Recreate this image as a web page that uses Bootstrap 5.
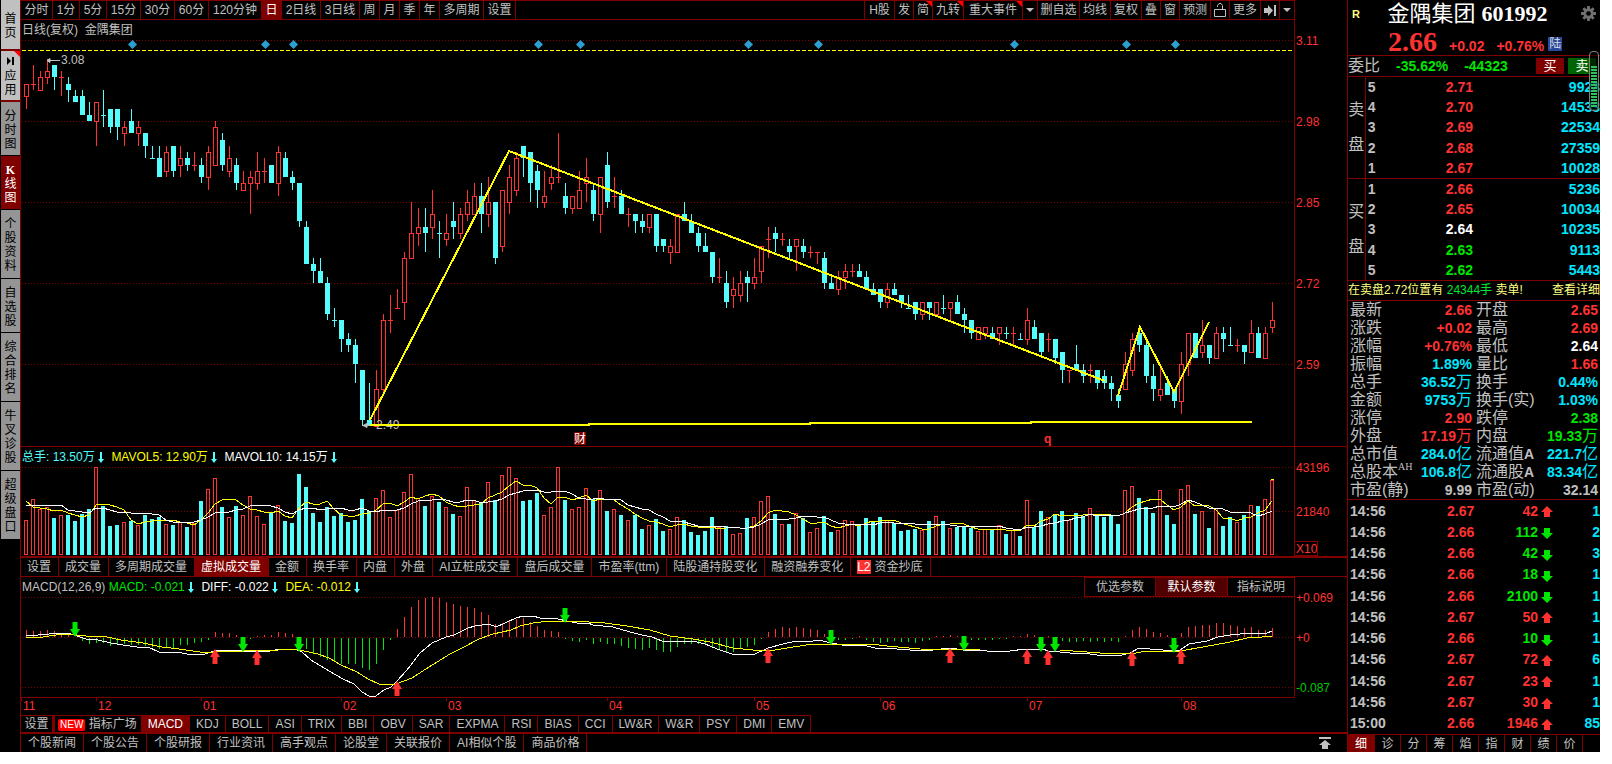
<!DOCTYPE html>
<html lang="zh-CN">
<head>
<meta charset="utf-8">
<meta name="viewport" content="width=device-width, initial-scale=1">
<title>金隅集团 601992</title>
<link href="https://cdn.jsdelivr.net/npm/bootstrap@5.3.0/dist/css/bootstrap.min.css" rel="stylesheet">
<style>
:root{--line:#800000;--up:#ff3232;--down:#00e600;--cyan:#00e6ff;--grey:#c0c0c0}
body{background:#fff;padding:0 12px 12px 0;font-family:"Liberation Sans","Noto Sans CJK SC",sans-serif;font-size:12px;line-height:18px;color:var(--grey)}
button,.newslink{background:#000;color:var(--grey);border:0;padding:0;font-size:12px;line-height:18px;text-decoration:none;white-space:nowrap;border-radius:0}
.app{background:#000}
.up{color:var(--up)}.down{color:var(--down)}.cy{color:var(--cyan)}.wh{color:#fff}
/* left navigation: one character fits on each line */
.side{width:21px;border-right:1px solid var(--line);padding-left:1px}
.side button{width:19px;height:54px;padding:2px 2px 0;white-space:normal;background:#959595;color:#000;border-bottom:1px solid #000;line-height:14px;text-align:center;position:relative}
.side .tall{height:69px}
.side .lite{background:#c0c0c0;height:51px;border-bottom:2px solid var(--line)}
.side .cur{background:var(--line);color:#fff}
.side b{font-family:"Liberation Serif",serif}
.corner{position:absolute;top:0;right:0;width:0;height:0;border-top:6px solid red;border-left:6px solid transparent}
/* toolbars */
.plot-w{width:calc(100% - 52px)}
.bar{height:20px;border-top:1px solid var(--line);border-bottom:1px solid var(--line)}
.bar button{position:relative;border-right:1px solid var(--line);text-align:center}
.bar button.on,.tabs button.on{background:var(--line);color:#fff}
.w15{width:15px}.w19{width:19px}.w20{width:20px}.w27{width:27px}.w30{width:30px}.w31{width:31px}.w32{width:32px}.w34{width:34px}.w39{width:39px}.w42{width:42px}.w44{width:44px}.w53{width:53px}.w59{width:59px}
.bar button svg{display:block;margin:0 auto}
.tabs button{padding:0 7px 0 6px;border-right:1px solid var(--line)}
.news{height:18px}
.newslink{padding:0 7px;border-right:1px solid var(--line)}
.newslink:hover{color:#fff}
.ind{height:19px;border-bottom:2px solid var(--line)}
.ind .cells{border-top:1px solid var(--line)}
.ind button{line-height:16px;padding:0 6px}
.ind .plaza{padding:0 4px 0 3px}
.badge-new{background:red;color:#fff;border-radius:2px;padding:0 2px;font-size:10px;line-height:12px;display:inline-block}
.badge-l2{background:var(--up);color:#fff;line-height:14px;display:inline-block;margin-right:4px}
.legend-row{height:20px;border-right:1px solid var(--line);line-height:20px;padding-left:1px}
.legend-row.first{height:18px}
.legend-row svg{vertical-align:-2px}
.price-box,.vol-box{border-bottom:1px solid var(--line)}
.params button{border:1px solid var(--line);border-left-width:0;width:72px;height:20px;line-height:18px}
.params button:first-child{border-left-width:1px}
.params button.on{background:#500000;color:#fff}
.params button:last-child{width:66px;border-right:0}
svg.chart{display:block;width:100%;height:auto;overflow:visible;font-size:12px}
/* quote panel */
.quote{width:253px;border-left:1px solid var(--line);font-size:14px}
.quote hr{margin:0;border:0;border-top:1px solid var(--line);opacity:1}
.stock{font-size:22px;line-height:27px;color:#fff;padding-right:6px}
.stock b,.last{font-family:"Liberation Serif",serif}
.last{font-size:28px;line-height:26px}
.tag-lu{background:#28479b;color:#ddd;font-size:12px;line-height:14px;width:14px;font-weight:400}
.deal{width:28px;height:16px;line-height:16px;color:#fff;font-size:13px}
.deal.buy{background:#800000}.deal.sell{background:#006400}
.lab{font-size:16px;font-weight:400;color:var(--grey)}
.sidecol{width:19px;border-right:1px solid var(--line);line-height:18px;text-align:center}
.qt{border-collapse:collapse;width:100%;font-weight:700;table-layout:fixed}
.qt td,.qt th{padding:0;white-space:nowrap}
.depth{height:101px}
.depth th{width:80px;padding-left:2px}
.depth td:nth-child(2){width:60px}
.note{height:19px;font-size:12px;color:#ffff80;line-height:19px;white-space:nowrap}
.stats{line-height:18px;padding:0}
.stats tr{height:18px}
.stats th{font-weight:400;font-size:16px;padding-left:2px;width:70px}
.stats td{text-align:right;padding-right:2px}
.stats td span{font-weight:400;font-size:16px}
.stats sup{font-size:10px;top:-7px;font-family:"Liberation Serif",serif}
.ticks{height:100%}
.ticks td{line-height:20px}
.ticks td:nth-child(1){width:99px;padding-left:2px}
.ticks td:nth-child(2){width:30px}
.ticks td:nth-child(3){width:61px;text-align:right}
.ticks td:nth-child(4){width:18px;text-align:center}
.ticks svg{display:block;margin:3px auto 0}
.minitabs{height:18px;border-top:1px solid var(--line)}
.minitabs button{width:26px;border-right:1px solid var(--line);line-height:16px}
.minitabs button.on{width:27px;background:var(--line);color:#fff}
.meter{position:absolute;right:1px;top:51px;width:10px;height:60px;border:1px solid #808080;border-radius:4px;background:rgba(0,0,0,.6);padding:14px 1px 2px}
.meter i{display:block;height:100%;background:repeating-linear-gradient(#2fc060 0 2px,transparent 2px 3px)}
</style>
</head>
<body>
<div class="app d-flex">
  <nav class="side d-flex flex-column flex-shrink-0" aria-label="导航">
    <button class="lite">首页</button>
    <button class="lite"><i class="corner"></i><svg class="d-block mx-auto mb-1" width="8" height="8" viewBox="0 0 8 8"><path d="M0 0L4 4L0 8zM4 0H4V8zM5 0H7V8H5z"/></svg>应用</button>
    <button>分时图</button>
    <button class="cur"><b>K</b>线图</button>
    <button class="tall">个股资料</button>
    <button>自选股</button>
    <button class="tall">综合排名</button>
    <button class="tall">牛叉诊股</button>
    <button class="tall">超级盘口</button>
  </nav>

  <main class="flex-fill" style="min-width:0">
    <div class="bar plot-w d-flex">
      <button class="w32">分时</button><button class="w27">1分</button><button class="w27">5分</button><button class="w34">15分</button><button class="w34">30分</button><button class="w34">60分</button><button class="w53">120分钟</button><button class="w20 on">日</button><button class="w39">2日线</button><button class="w39">3日线</button><button class="w20">周</button><button class="w20">月</button><button class="w20">季</button><button class="w20">年</button><button class="w44">多周期</button><button class="w32">设置</button>
      <div class="ms-auto d-flex border-start" style="border-color:var(--line)!important">
        <button class="w30">H股</button><button class="w19">发</button><button class="w19">简<i class="corner"></i></button><button class="w31">九转<i class="corner"></i></button><button class="w59">重大事件<i class="corner"></i></button><button class="w15" aria-label="展开"><svg width="8" height="4"><path d="M0 0H8L4 4z" fill="#c0c0c0"/></svg></button><button class="w42">删自选</button><button class="w31">均线</button><button class="w31">复权</button><button class="w19">叠</button><button class="w19">窗</button><button class="w31">预测</button><button class="w19" aria-label="锁定"><svg width="12" height="14" fill="none" stroke="#c0c0c0"><path d="M.5 6.500H11.500V13.500H.5zM3.500 4V2.500L5 .5H7L8.500 2.500V6"/></svg></button><button class="w31">更多</button><button class="w19" aria-label="下一个"><svg width="12" height="11" fill="#c0c0c0"><path d="M0 3H4V0L9 5.500L4 11V8H0zM10 0H12V11H10z"/></svg></button><button class="w15" aria-label="展开"><svg width="8" height="4"><path d="M0 0H8L4 4z" fill="#c0c0c0"/></svg></button>
      </div>
    </div>

    <section class="price-box">
      <div class="legend-row first plot-w">日线(复权)&nbsp; 金隅集团</div>
      <svg class="chart" viewBox="21 38 1326 408" id="price" role="img" aria-label="日K线">
        <rect x="1294" y="38" width="1" height="408" fill="#800000"/>
        <g stroke="#800000" stroke-dasharray="1 2" shape-rendering="crispEdges">
          <path d="M22 40.500H1294M22 121.500H1294M22 202.500H1294M22 283.500H1294M22 364.500H1294"/>
        </g>
        <path d="M22 50.500H1292" stroke="#ff0" stroke-dasharray="4 2"/>
        <g id="diamonds" fill="#2a9fd0"></g>
        <g id="candles" shape-rendering="crispEdges"></g>
        <path d="M47 60.500H60M47 60.500l3-2v4z" stroke="#c0c0c0" fill="#c0c0c0"/>
        <text x="61" y="64" fill="#c0c0c0">3.08</text>
        <path d="M363 425.500H375M363 425.500l4-2v4z" stroke="#c0c0c0" fill="#c0c0c0"/>
        <text x="376" y="429" fill="#c0c0c0">2.49</text>
        <g stroke="#ff0" stroke-width="2" fill="none" shape-rendering="crispEdges">
          <path d="M370 420L509 151L1105 381M1118 396L1140 327L1174 392L1209 322"/>
          <path d="M370 425H589V424H810V423H1031V422H1252"/>
        </g>
        <rect x="574" y="432" width="12" height="13" fill="#800000"/>
        <text x="574" y="443" fill="#fff">财</text>
        <text x="1044" y="443" fill="#ff3232" font-weight="700">q</text>
        <g fill="#ff3232"><text x="1296" y="45">3.11</text><text x="1296" y="126">2.98</text><text x="1296" y="207">2.85</text><text x="1296" y="288">2.72</text><text x="1296" y="369">2.59</text></g>
      </svg>
    </section>

    <section class="vol-box">
      <div class="legend-row plot-w"><span style="color:#54fcfc">总手: 13.50万<svg width="10" height="12"><use href="#dn"/></svg></span>&nbsp; <span style="color:#ff0">MAVOL5: 12.90万<svg width="10" height="12"><use href="#dn"/></svg></span>&nbsp; <span class="wh">MAVOL10: 14.15万<svg width="10" height="12"><use href="#dn"/></svg></span></div>
      <svg class="chart" viewBox="21 467 1326 89" role="img" aria-label="成交量">
        <defs><path id="dn" d="M5 1h2v7h2L6 12L3 8h2z" fill="#54fcfc"/></defs>
        <rect x="1294" y="467" width="1" height="89" fill="#800000"/>
        <path d="M22 467.500H1294M22 511.500H1294" stroke="#800000" stroke-dasharray="1 2" shape-rendering="crispEdges"/>
        <g id="vols" shape-rendering="crispEdges"></g>
        <g fill="#ff3232"><text x="1296" y="472">43196</text><text x="1296" y="516">21840</text><text x="1296" y="553">X10</text></g>
        <rect x="1294.500" y="541.500" width="23" height="14" fill="none" stroke="#800000"/>
      </svg>
    </section>

    <div class="bar tabs d-flex">
      <button>设置</button><button>成交量</button><button>多周期成交量</button><button class="on">虚拟成交量</button><button>金额</button><button>换手率</button><button>内盘</button><button>外盘</button><button>AI立桩成交量</button><button>盘后成交量</button><button>市盈率(ttm)</button><button>陆股通持股变化</button><button>融资融券变化</button><button><span class="badge-l2">L2</span>资金抄底</button>
    </div>

    <section>
      <div class="legend-row plot-w d-flex"><div>MACD(12,26,9) <span class="down">MACD: -0.021<svg width="10" height="12"><use href="#dn"/></svg></span>&nbsp; <span class="wh">DIFF: -0.022<svg width="10" height="12"><use href="#dn"/></svg></span>&nbsp; <span style="color:#ff0">DEA: -0.012<svg width="10" height="12"><use href="#dn"/></svg></span></div>
        <div class="params ms-auto d-flex"><button>优选参数</button><button class="on">默认参数</button><button>指标说明</button></div>
      </div>
      <svg class="chart" viewBox="21 597 1326 118" role="img" aria-label="MACD">
        <path d="M22 597.500H1294M22 637.500H1294M22 687.500H1294" stroke="#800000" stroke-dasharray="1 2" shape-rendering="crispEdges"/>
        <path d="M21 697.500H1294.500V597" fill="none" stroke="#800000"/>
        <g id="hist" shape-rendering="crispEdges"></g>
        <g fill="none" shape-rendering="crispEdges">
          <polyline stroke="#fff" points="26,636 61,633 68,633 77,636 86,639 98,640 111,643 123,645 137,647 148,647 159,652 182,653 187,654 205,654 214,651 218,650 234,650 243,651 257,651 270,651 280,649 295,649 302,652 311,660 329,671 343,679 354,684 362,692 369,696 376,696 384,690 391,687 397,681 407,670 420,653 432,643 446,637 454,635 468,628 475,626 489,624 496,627 516,618 523,616 533,616 540,618 558,619 567,621 577,623 588,623 593,625 613,627 630,632 642,635 652,637 662,641 668,642 678,641 693,641 705,644 717,649 732,654 755,654 768,648 787,643 797,641 813,641 818,640 832,643 842,645 863,645 875,648 897,649 910,650 933,650 950,648 963,650 987,651 1010,651 1025,649 1043,649 1048,651 1060,652 1070,653 1090,654 1097,655 1112,655 1118,656 1130,653 1139,648 1150,649 1163,650 1180,650 1189,644 1207,641 1218,637 1230,635 1240,634 1252,633 1260,634 1267,633 1272,631"/>
          <polyline stroke="#ff0" points="26,638 43,637 62,634 77,635 86,636 107,637 121,640 143,643 162,647 179,649 200,652 214,652 243,651 279,650 296,649 304,651 318,654 329,658 341,665 357,672 368,679 379,684 396,684 412,678 429,667 450,654 464,647 479,639 493,634 511,630 520,626 533,623 550,621 573,621 605,623 627,626 650,630 670,636 693,639 710,642 733,648 753,650 775,650 787,648 813,644 832,644 870,644 887,646 920,649 980,650 1060,650 1100,653 1130,654 1147,651 1180,651 1203,647 1230,642 1247,638 1262,637 1272,636"/>
        </g>
        <g id="signals"></g>
        <g id="months" fill="#ff3232"></g>
        <g fill="#ff3232"><text x="1296" y="602">+0.069</text><text x="1296" y="642">+0</text><text x="1296" y="692" fill="#00c800">-0.087</text></g>
      </svg>
    </section>

    <div class="ind d-flex tabs">
      <div class="cells d-flex"><button class="w34 px-0" style="border-right-width:3px">设置</button><button class="plaza"><span class="badge-new">NEW</span> 指标广场</button><button class="on">MACD</button><button>KDJ</button><button>BOLL</button><button>ASI</button><button>TRIX</button><button>BBI</button><button>OBV</button><button>SAR</button><button>EXPMA</button><button>RSI</button><button>BIAS</button><button>CCI</button><button>LW&amp;R</button><button>W&amp;R</button><button>PSY</button><button>DMI</button><button>EMV</button></div>
    </div>
    <div class="news d-flex">
      <a class="newslink" href="#">个股新闻</a><a class="newslink" href="#">个股公告</a><a class="newslink" href="#">个股研报</a><a class="newslink" href="#">行业资讯</a><a class="newslink" href="#">高手观点</a><a class="newslink" href="#">论股堂</a><a class="newslink" href="#">关联报价</a><a class="newslink" href="#">AI相似个股</a><a class="newslink" href="#">商品价格</a>
      <button class="ms-auto me-3" aria-label="收起"><svg class="d-block" width="12" height="12" fill="#c0c0c0"><path d="M0 0H12V2H0zM6 3L12 8H9V12H3V8H0z"/></svg></button>
    </div>
  </main>

  <aside class="quote d-flex flex-column flex-shrink-0 position-relative">
    <div class="d-flex justify-content-between align-items-center">
      <b class="ps-1" style="color:#ffff80;font-size:11px">R</b>
      <div class="stock">金隅集团 <b>601992</b></div>
      <svg class="me-1" width="15" height="15" viewBox="0 0 16 16"><g stroke="#707070" stroke-width="3"><path d="M8 0V16M0 8H16M2.500 2.500L13.500 13.500M13.500 2.500L2.500 13.500"/></g><circle cx="8" cy="8" r="5.500" fill="#707070"/><circle cx="8" cy="8" r="2.500"/></svg>
    </div>
    <div class="d-flex align-items-end up fw-bold" style="height:28px;padding-left:40px">
      <span class="last">2.66</span><span class="ms-2 ps-1">+0.02</span><span class="ms-2 ps-1">+0.76%</span><span class="tag-lu ms-1 mb-1 text-center">陆</span>
    </div>
    <hr>
    <div class="d-flex align-items-center fw-bold down" style="height:20px">
      <span class="lab">委比</span><span class="ms-3">-35.62%</span><span class="ms-3">-44323</span>
      <button class="deal buy ms-auto me-1">买</button><button class="deal sell me-1">卖</button>
    </div>
    <hr>
    <div class="d-flex">
      <div class="sidecol lab d-flex flex-column justify-content-around py-3"><span>卖</span><span>盘</span></div>
      <table class="qt depth" id="asks"></table>
    </div>
    <hr>
    <div class="d-flex">
      <div class="sidecol lab d-flex flex-column justify-content-around py-3"><span>买</span><span>盘</span></div>
      <table class="qt depth" id="bids"></table>
    </div>
    <hr>
    <div class="note d-flex"><span>在卖盘2.72位置有 <span style="color:#00e632">24344手</span> 卖单!</span><a class="ms-auto text-decoration-none" style="color:inherit" href="#">查看详细</a></div>
    <hr>
    <table class="qt stats" id="stats"></table>
    <hr>
    <div class="flex-fill"><table class="qt ticks" id="ticks"></table></div>
    <div class="minitabs d-flex"><button class="on">细</button><button>诊</button><button>分</button><button>筹</button><button>焰</button><button>指</button><button>财</button><button>绩</button><button>价</button></div>
    <div class="meter"><i></i></div>
  </aside>
</div>

<script src="https://cdn.jsdelivr.net/npm/bootstrap@5.3.0/dist/js/bootstrap.bundle.min.js"></script>
<script>
// colour, high, body top, body bottom, low (prices in fen)
const K = `r304 304 302 300,r307 304 304 303,r306 305 303 303,r308 306 305 304,c307 307 305 303,r306 305 305 302,c305 304 303 301,c303 302 301 301,c303 302 299 299,c301 299 298 298,r301 301 298 294,c303 299 299 297,c300 300 297 296,c300 300 297 295,r298 297 296 294,c300 298 296 296,r298 297 296 294,c296 296 294 292,c294 292 292 292,c294 292 289 289,r294 293 290 289,c294 294 290 289,r294 292 291 289,c293 292 291 290,r293 291 291 290,c292 291 289 288,r294 293 289 287,r298 297 291 291,c296 295 291 290,r294 292 290 289,c292 291 288 287,r290 288 287 287,r290 289 288 283,r293 290 288 287,r292 290 290 288,c291 291 288 288,r294 293 288 286,c293 292 289 289,c290 289 288 287,c288 288 282 281,c282 281 275 275,c276 275 274 272,c276 274 272 272,c273 272 267 266,c268 266 266 265,c266 266 263 261,c264 263 262 261,c263 262 259 256,c258 258 250 249,c256 250 249 249,r258 255 249 249,r267 266 255 254,r270 266 266 264,r271 268 268 268,r277 276 269 266,r285 280 276 276,r284 281 280 278,c284 281 280 277,r287 283 281 279,c282 280 280 276,r283 280 279 278,c285 282 281 279,r284 283 280 279,r287 285 283 282,r288 286 283 283,c288 286 283 280,r289 285 283 281,c285 285 276 275,r287 287 278 277,r291 289 285 283,r293 292 287 286,c294 294 292 289,c293 293 288 285,c291 290 287 284,r290 286 285 284,r291 289 288 287,r296 289 289 288,c288 286 284 283,r286 286 284 283,r290 287 284 284,r292 289 288 285,c288 287 283 282,r289 289 283 280,c293 291 285 284,r289 286 286 284,c287 286 283 283,r284 283 283 281,c283 283 282 280,c283 282 281 280,r283 283 281 280,c283 283 278 277,c279 279 278 277,r279 278 277 275,r283 283 277 277,c285 283 282 282,c283 282 280 280,c281 280 278 277,c280 278 277 277,c277 277 273 272,r276 273 273 272,c274 272 269 268,r273 271 270 268,r274 272 270 269,c274 273 272 269,r276 273 272 271,r278 278 274 272,r281 279 279 276,c281 280 279 277,r280 279 279 278,c279 278 277 276,r279 279 278 274,c279 278 277 276,r278 277 277 276,r277 277 277 275,c277 276 272 271,c273 272 271 271,r274 273 271 270,r275 274 273 271,r275 274 274 273,c275 274 273 273,c274 273 271 271,c272 271 270 270,c271 271 269 268,r272 271 269 268,c272 271 270 270,c270 270 269 268,c270 268 268 268,c269 269 267 266,r269 269 267 266,c269 269 268 266,r269 269 267 267,c270 268 268 267,r269 269 268 266,c270 269 267 267,c268 267 266 264,c266 266 264 263,r265 265 263 263,r265 265 264 263,c265 264 263 263,r265 265 264 262,c265 264 264 263,r265 264 264 262,c264 263 263 263,r268 266 263 262,c266 265 263 263,c264 264 261 260,r264 263 263 261,c263 263 260 259,c261 261 258 256,r258 258 258 256,c262 259 258 258,c259 258 257 256,r259 258 258 256,c258 258 256 255,c258 257 256 255,c257 256 255 253,c255 254 253 252,r261 259 255 255,r264 263 258 257,c265 264 262 261,c263 262 257 256,c259 257 255 253,r259 255 254 253,c257 256 254 254,c255 255 253 252,r261 259 253 251,r264 264 259 257,c264 264 260 260,r266 262 261 260,c262 262 260 259,r265 264 260 260,c265 264 263 261,c265 262 262 262,r263 262 262 261,c262 262 261 259,r266 264 261 261,c265 264 260 260,r265 264 260 260,r269 266 265 264`.split(',');
const RED='#ff3232', CY='#54fcfc';
const rect=(x,y,w,h,f)=>`<rect x="${x}" y="${y}" width="${w}" height="${h}" fill="${f}"/>`;
const box=(x,y,w,h)=>`<rect x="${x+.5}" y="${y+.5}" width="${w-1}" height="${h-1}" fill="#000" stroke="${RED}"/>`;
const py=p=>Math.round(40+(311-p)*6.23);
const $=id=>document.getElementById(id);
$('candles').innerHTML=K.map((s,i)=>{
  const red=s[0]==='r', [h,t,b,l]=s.slice(1).split(' ').map(v=>py(+v)), x=24+7*i, c=red?RED:CY;
  let o=rect(x+2,h,1,Math.max(1,l-h),c);
  o+= t===b ? rect(x,t,5,1,c) : red ? box(x,t,5,b-t+1) : rect(x,t,5,b-t,c);
  return o;
}).join('');
$('diamonds').innerHTML=[132,265,293,538,580,748,818,1014,1126,1175].map(x=>`<path d="M${x-4} 44.500L${x+.5} 40L${x+5} 44.500L${x+.5} 49z"/>`).join('');

// turnover bars: distance of each top below the pane's reference, three units to a pixel
const V=[241,178,208,200,235,226,226,243,222,208,82,199,259,256,247,244,256,226,238,232,253,256,247,262,250,184,148,115,202,232,199,226,169,229,253,220,196,244,250,103,142,220,247,202,229,220,247,241,178,214,175,151,232,211,157,103,175,199,169,187,202,223,229,142,181,190,127,181,106,82,115,184,181,160,226,202,82,181,208,202,145,178,151,214,208,226,241,226,268,256,238,274,268,232,241,277,286,274,232,262,259,283,280,235,232,184,169,223,253,253,220,235,277,265,229,277,271,241,244,253,235,244,232,241,250,274,271,268,271,244,229,244,265,262,262,265,274,268,268,256,283,271,289,181,262,214,232,223,214,241,220,229,205,226,232,226,253,151,139,175,202,220,151,226,253,148,136,223,214,265,205,259,232,247,226,196,199,178,121];
const vy=v=>Math.round(440+v/3);
const ma=(n,seed)=>V.map((_,i)=>{
  const v=i<seed.length?seed[i]:V.slice(i-n+1,i+1).reduce((a,b)=>a+b)/n;
  return (26+7*i)+','+vy(v);
}).join(' ');
$('vols').innerHTML=V.map((v,i)=>{
  const x=24+7*i,y=vy(v);
  return K[i][0]==='r'?box(x,y,4,555-y):rect(x,y,4,555-y,CY);
}).join('')
 +`<polyline fill="none" stroke="#ff0" points="${ma(5,[184,202,205,208])}"/>`
 +`<polyline fill="none" stroke="#fff" points="${ma(10,[196,196,196,196,196,196,211,214,217])}"/>`
 +rect(1271,479,3,1,'#ff0');

// MACD histogram, three units to a pixel
const H=[22,19,19,22,19,13,6,0,-8,-18,-15,-15,-23,-20,-18,-22,-20,-24,-28,-34,-31,-29,-22,-20,-14,-13,-5,16,13,13,7,-10,-2,3,6,7,16,13,10,-14,-32,-44,-56,-65,-72,-79,-79,-79,-91,-97,-79,-35,-5,25,61,91,112,118,120,118,106,100,94,91,88,76,67,40,43,49,55,58,46,34,22,19,16,-2,-8,-11,-5,-17,-11,-17,-17,-23,-29,-32,-35,-29,-37,-41,-41,-26,-18,-18,-18,-21,-28,-37,-44,-41,-32,-28,-20,-2,16,25,31,28,31,28,25,22,10,-2,-5,-5,-3,2,-5,-11,-14,-11,-8,-11,-11,-14,-8,-5,2,3,7,4,-3,-5,-5,-5,-5,-3,-2,3,2,10,7,0,2,-3,-8,-11,-11,-8,-11,-8,-11,-8,-11,3,22,31,25,16,13,7,0,13,31,34,37,37,43,43,37,34,28,31,22,22,28];
$('hist').innerHTML=H.map((v,i)=>{
  const n=Math.round(Math.abs(v)/3), x=26+7*i;
  return !n?'':v>0?rect(x,637-n,1,n,RED):rect(x,638,1,n,'#00e600');
}).join('');
const upA=([x,y])=>`<path d="M${x} ${y}l5 8h-2.500v7h-5v-7h-2.500z" fill="${RED}"/>`;
const dnA=([x,y])=>`<path d="M${x} ${y}l5-8h-2.500v-7h-5v7h-2.500z" fill="#00e600"/>`;
$('signals').innerHTML=[[215,649],[257,650],[397,681],[768,648],[950,648],[1027,649],[1048,650],[1132,651],[1181,649]].map(upA).join('')
 +[[75,637],[243,652],[299,652],[565,623],[831,645],[964,651],[1041,652],[1055,652],[1174,653]].map(dnA).join('');
$('months').innerHTML=[['11',21],['12',96],['01',201],['02',341],['03',446],['04',607],['05',754],['06',880],['07',1027],['08',1181]]
 .map(([m,x])=>rect(x,698,1,3,'#800000')+`<text x="${x+2}" y="710">${m}</text>`).join('');

const depth=rows=>rows.map(([n,p,v,c])=>`<tr><th scope="row">${n}</th><td class="${c||'up'}">${p}</td><td class="cy text-end">${v}</td></tr>`).join('');
$('asks').innerHTML=depth([[5,'2.71',9923],[4,'2.70',14533],[3,'2.69',22534],[2,'2.68',27359],[1,'2.67',10028]]);
$('bids').innerHTML=depth([[1,'2.66',5236],[2,'2.65',10034],[3,'2.64',10235,'wh'],[4,'2.63',9113,'down'],[5,'2.62',5443,'down']]);
const unit=s=>s.replace(/[万亿]/,'<span>$&</span>');
$('stats').innerHTML=[
 ['最新','2.66','up','开盘','2.65','up'],['涨跌','+0.02','up','最高','2.69','up'],['涨幅','+0.76%','up','最低','2.64','wh'],
 ['振幅','1.89%','cy','量比','1.66','up'],['总手','36.52万','cy','换手','0.44%','cy'],['金额','9753万','cy','换手(实)','1.03%','cy'],
 ['涨停','2.90','up','跌停','2.38','down'],['外盘','17.19万','up','内盘','19.33万','down'],['总市值','284.0亿','cy','流通值<small><b>A</b></small>','221.7亿','cy'],
 ['总股本<sup>AH</sup>','106.8亿','cy','流通股<small><b>A</b></small>','83.34亿','cy'],['市盈(静)','9.99','','市盈(动)','32.14','']
].map(r=>`<tr><th scope="row">${r[0]}</th><td class="${r[2]}">${unit(r[1])}</td><th scope="row">${r[3]}</th><td class="${r[5]}">${unit(r[4])}</td></tr>`).join('');
$('ticks').innerHTML=[['14:56','2.67',42,1,1],['14:56','2.66',112,0,2],['14:56','2.66',42,0,3],['14:56','2.66',18,0,1],['14:56','2.66',2100,0,1],['14:56','2.67',50,1,1],['14:56','2.66',10,0,1],['14:56','2.67',72,1,6],['14:56','2.67',23,1,1],['14:56','2.67',30,1,1],['15:00','2.66',1946,1,85]]
 .map(([t,p,v,u,n])=>`<tr class="${u?'up':'down'}"><td style="color:var(--grey)">${t}</td><td class="up">${p}</td><td>${v}</td><td><svg width="12" height="12" fill="currentColor"><path d="${u?'M6 0L12 6H9V11H3V6H0z':'M6 12L12 6H9V1H3V6H0z'}"/></svg></td><td class="cy text-end">${n}</td></tr>`).join('');
</script>
</body>
</html>
